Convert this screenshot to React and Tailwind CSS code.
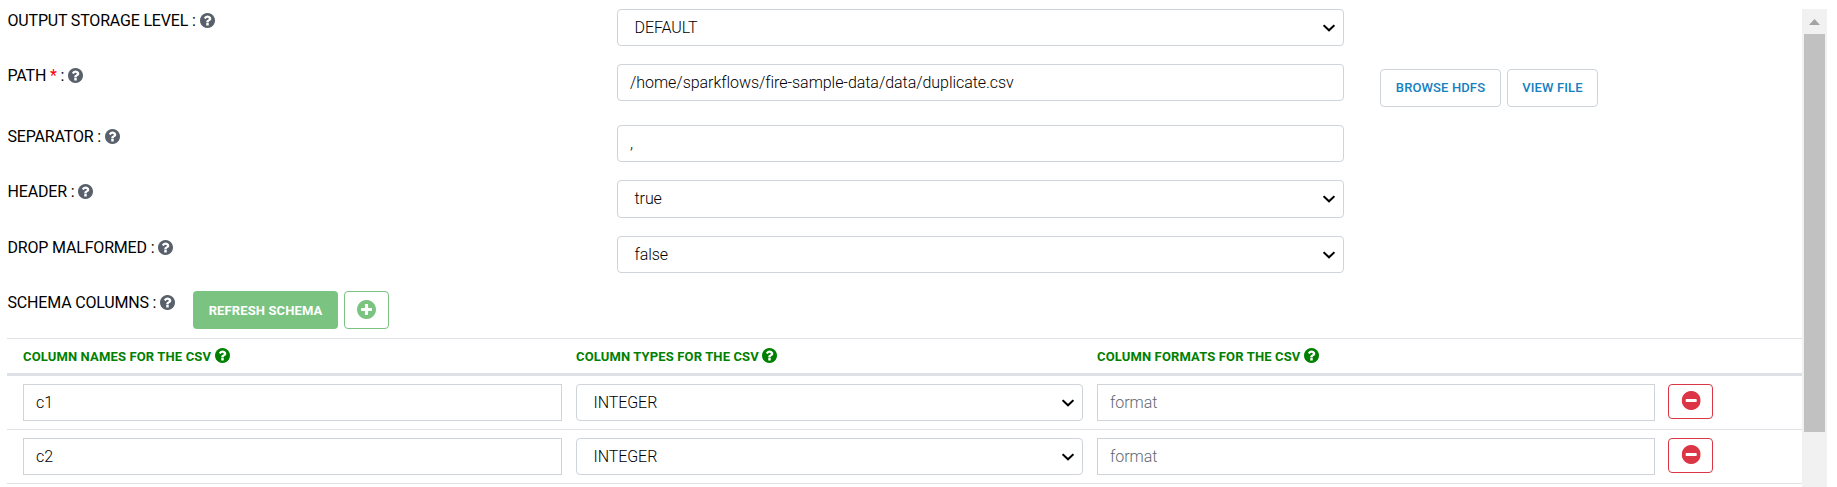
const DISC = "M1664 896q0 209-103 385.5t-279.5 279.5-385.5 103-385.5-103-279.5-279.5-103-385.5 103-385.5 279.5-279.5 385.5-103 385.5 103 279.5 279.5 103 385.5z";
const GLYPHS = {
  help: "M1024 1376v-192q0-14-9-23t-23-9h-192q-14 0-23 9t-9 23v192q0 14 9 23t23 9h192q14 0 23-9t9-23zM1280 704q0-88-55.5-163t-138.5-116-170-41q-243 0-371 213-15 24 8 42l132 100q7 6 19 6 16 0 25-12 53-68 86-92 34-24 86-24 48 0 85.5 26t37.5 59q0 38-20 61t-68 45q-63 28-115.5 86.5t-52.5 125.5v36q0 14 9 23t23 9h192q14 0 23-9t9-23q0-19 21.5-49.5t54.5-49.5q32-18 49-28.5t46-35 44.5-48 28-60.500 12.500-81z",
  plus: "M1344 960v-128q0-26-19-45t-45-19h-256v-256q0-26-19-45t-45-19h-128q-26 0-45 19t-19 45v256h-256q-26 0-45 19t-19 45v128q0 26 19 45t45 19h256v256q0 26 19 45t45 19h128q26 0 45-19t19-45v-256h256q26 0 45-19t19-45z",
  minus: "M1344 960v-128q0-26-19-45t-45-19h-768q-26 0-45 19t-19 45v128q0 26 19 45t45 19h768q26 0 45-19t19-45z",
};

function DiscIcon({ name, className }) {
  return (
    <svg className={`shrink-0 ${className}`} viewBox="128 128 1536 1536">
      <path fill="currentColor" d={DISC} />
      <path fill="#fff" d={GLYPHS[name]} />
    </svg>
  );
}

function Label({ text, required }) {
  return (
    <div className="-ml-[0.5px] flex h-[22px] items-center text-base tracking-[-0.18px] text-black">
      <span className="translate-y-px">
        {text} {required && <span className="text-[#ff0000]">* </span>}:
      </span>
      <DiscIcon name="help" className="ml-1 size-[15px] text-[#58606b]" />
    </div>
  );
}

function Chevron() {
  return (
    <svg className="size-3" viewBox="0 0 12 12" fill="none" stroke="#000" strokeWidth="2">
      <path d="M0.6 3.200 6 8.300 11.4 3.200" />
    </svg>
  );
}

function Select({ value, tall }) {
  return (
    <div className={`flex w-full items-center justify-between rounded border border-[#ced4da] pr-2 pl-[16.5px] text-black ${tall ? "h-[38px]" : "h-[37px]"}`}>
      <span className="font-light tracking-[-0.08px]">{value}</span>
      <Chevron />
    </div>
  );
}

function Row({ label, required, className, children }) {
  return (
    <div className={`flex ${className}`}>
      <div className="w-[609px] shrink-0">
        <Label text={label} required={required} />
      </div>
      {children}
    </div>
  );
}

function Input({ value, placeholder, className }) {
  return (
    <div className={`flex h-[37px] items-center border border-[#ced4da] px-3 font-light tracking-[-0.05px] ${className ?? ""}`}>
      {value ? <span className="text-black">{value}</span> : <span className="text-[#5f6871]">{placeholder}</span>}
    </div>
  );
}

const grid = "grid grid-cols-[539px_507px_558px_45px] gap-x-[14px] pl-4";

export default function App() {
  return (
    <div className="flex h-[487px] w-[1837px] overflow-hidden bg-white pt-[9px] pl-[7px] font-[Roboto,sans-serif] text-base leading-6">
      <div className="w-[1795px] shrink-0">
        <Row label="OUTPUT STORAGE LEVEL" className="h-[55px] pl-px">
          <div className="w-[727px]"><Select value="DEFAULT" /></div>
        </Row>
        <Row label="PATH" required className="h-[61px] pl-px">
          <Input value="/home/sparkflows/fire-sample-data/data/duplicate.csv" className="w-[727px] rounded" />
          <div className="mt-[5px] ml-9 flex gap-1.5 text-[13px] font-medium tracking-[0.12px] text-[#1480c0]">
            <div className="flex h-[38px] w-[121px] items-center justify-center rounded border border-[#ced4da]">BROWSE HDFS</div>
            <div className="flex h-[38px] w-[91px] items-center justify-center rounded border border-[#ced4da]">VIEW FILE</div>
          </div>
        </Row>
        <Row label="SEPARATOR" className="h-[55px] pl-px">
          <Input value="," className="w-[727px] rounded" />
        </Row>
        <Row label="HEADER" className="h-[56px] pl-px">
          <div className="w-[727px]"><Select value="true" tall /></div>
        </Row>
        <Row label="DROP MALFORMED" className="h-[55px] pl-px">
          <div className="w-[727px]"><Select value="false" /></div>
        </Row>
        <div className="flex h-[47px] pl-px">
          <div className="w-[185px]"><Label text="SCHEMA COLUMNS" /></div>
          <div className="flex h-[38px] w-[145px] items-center justify-center rounded bg-[#7ac381] text-[13px] font-bold tracking-[0.12px] text-white">
            <span className="translate-y-px">REFRESH SCHEMA</span>
          </div>
          <div className="ml-1.5 flex h-[38px] w-[45px] items-center justify-center rounded border border-[#7ac381] text-[#7ac381]">
            <DiscIcon name="plus" className="size-[19px] -translate-y-px" />
          </div>
        </div>
        <div className={`${grid} h-[38px] border-t border-b-3 border-[#dee2e6] text-[13px] font-bold tracking-[0.14px] text-[#008000]`}>
          {["COLUMN NAMES FOR THE CSV", "COLUMN TYPES FOR THE CSV", "COLUMN FORMATS FOR THE CSV"].map((t) => (
            <div key={t} className="flex items-center">
              <span className="translate-y-px">{t}</span>
              <DiscIcon name="help" className="ml-[3.5px] size-[15px] -translate-y-px" />
            </div>
          ))}
        </div>
        {["c1", "c2"].map((c) => (
          <div key={c} className={`${grid} h-[54px] border-b border-[#dee2e6] pt-2`}>
            <Input value={c} />
            <Select value="INTEGER" />
            <Input placeholder="format" />
            <div className="-ml-px flex h-[35px] w-[45px] items-center justify-center rounded border border-[#dc3545] text-[#dc3545]">
              <DiscIcon name="minus" className="size-[19px] translate-x-[0.7px] -translate-y-px" />
            </div>
          </div>
        ))}
      </div>
      <div className="flex w-[25px] shrink-0 flex-col items-center bg-[#f1f1f1]">
        <svg className="h-[25px] w-[11px]" viewBox="0 0 11 25">
          <path d="M0 16 5.5 10 11 16Z" fill="#a3a3a3" />
        </svg>
        <div className="h-[398px] w-[21px] shrink-0 bg-[#c1c1c1]" />
      </div>
    </div>
  );
}
